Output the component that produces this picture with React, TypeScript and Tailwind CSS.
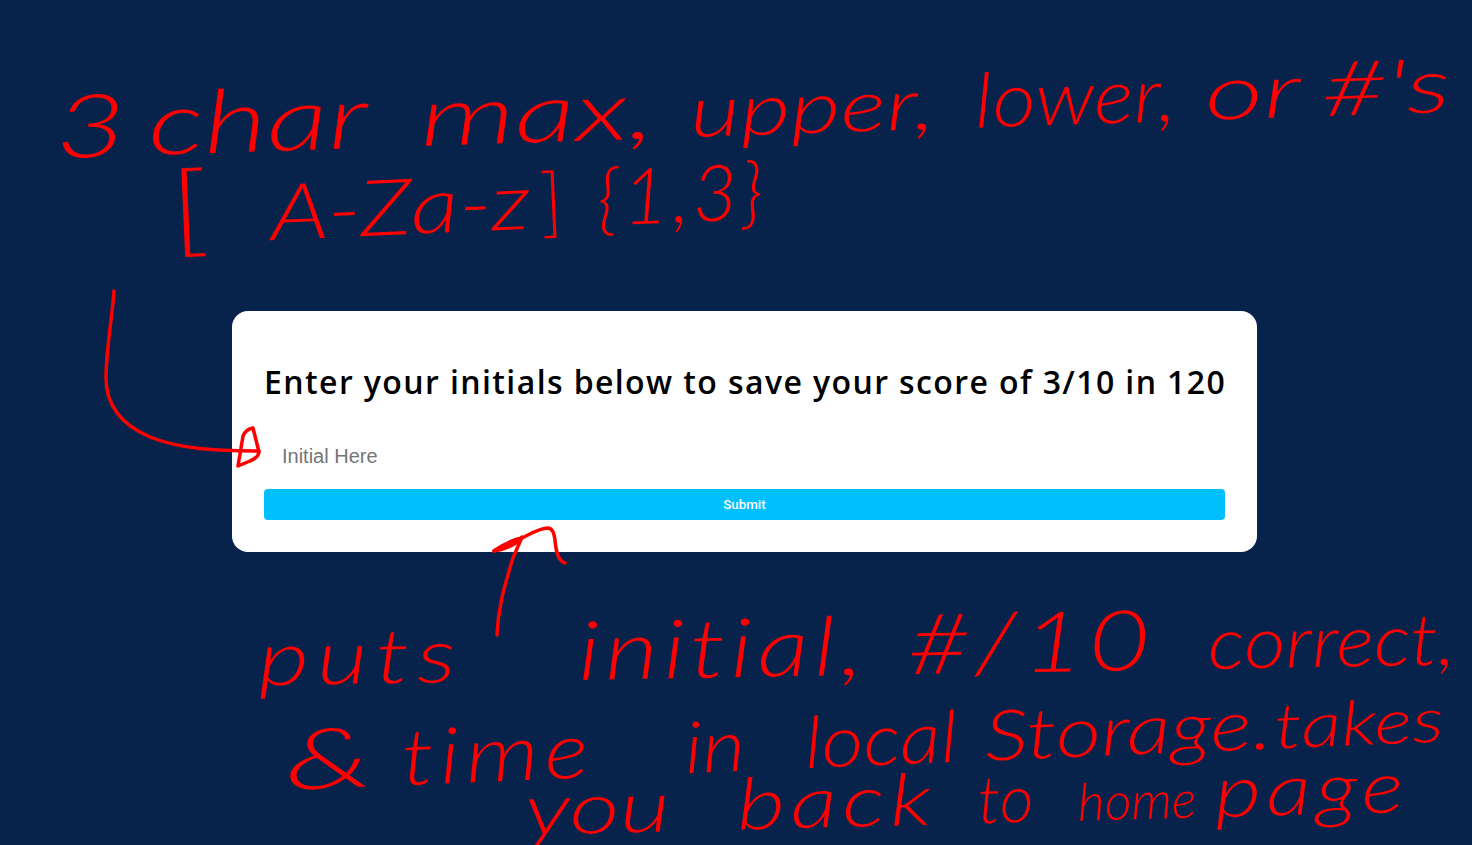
function Word({ className, children }: { className: string; children: React.ReactNode }) {
  return <span className={`block shrink-0 origin-left ${className}`}>{children}</span>;
}

const noteRow =
  "flex shrink-0 items-baseline origin-left whitespace-nowrap font-['Lato',sans-serif] font-light italic leading-none text-[#ff0000]";

export default function App() {
  return (
    <div className="relative flex h-screen flex-col overflow-hidden bg-[#07234b]">
      {/* notes above the card */}
      <div className="flex h-[311px] shrink-0 flex-col pt-[82px]">
        <div className={`${noteRow} rotate-[-1.9deg] pl-[55px] text-[88px]`}>
          <Word className="w-[93px] scale-x-[1.4]">3</Word>
          <Word className="w-[272px] scale-x-[1.39]">char</Word>
          <Word className="w-[270px] scale-x-[1.48] text-[82px]">max,</Word>
          <Word className="w-[285px] scale-x-[1.35] text-[72px]">upper,</Word>
          <Word className="w-[230px] scale-x-[1.11] text-[76px]">lower,</Word>
          <Word className="w-[117px] scale-x-[1.5] text-[76px]">or</Word>
          <Word className="scale-x-[1.47] text-[76px]">#'s</Word>
        </div>
        <div className={`${noteRow} -mt-[7px] rotate-[-2.5deg] pl-[170px] text-[78px]`}>
          <Word className="w-[100px] scale-x-[1.3] text-[100px] not-italic">[</Word>
          <Word className="w-[270px] scale-x-[1.23]">A-Za-z</Word>
          <Word className="w-[57px] text-[76px] not-italic">]</Word>
          <Word className="tracking-[4px]">{"{1,3}"}</Word>
        </div>
      </div>

      <div className="ml-[232px] h-[241px] w-[1025px] shrink-0 rounded-2xl bg-white px-8 pt-[52px]">
        <h1 className="whitespace-nowrap font-['Open_Sans',sans-serif] text-[32px] font-semibold leading-[38px] tracking-[1.4px] text-black">
          Enter your initials below to save your score of 3/10 in 120
        </h1>
        <form className="mt-[37px] flex flex-col">
          <input
            placeholder="Initial Here"
            className="h-[36px] w-full pl-[18px] font-['Liberation_Sans',sans-serif] text-[20px] outline-none placeholder:text-[#757575]"
          />
          <button className="mt-[15px] h-[31px] w-full rounded bg-[#00bfff] font-['Roboto',sans-serif] text-[13.33px] font-medium text-white">
            Submit
          </button>
        </form>
      </div>

      {/* notes below the card */}
      <div className="flex shrink-0 flex-col pt-[64px]">
        <div className={`${noteRow} rotate-[-1deg] pl-[258px] text-[84px]`}>
          <Word className="w-[320px] scale-x-[1.3] text-[76px] tracking-[6px]">puts</Word>
          <Word className="w-[330px] scale-x-[1.26] text-[82px] tracking-[4px]">initial,</Word>
          <Word className="w-[300px] scale-x-[1.26] tracking-[4px]">#/10</Word>
          <Word className="scale-x-[1.12] text-[72px]">correct,</Word>
        </div>
        <div className={`${noteRow} mt-[28px] rotate-[-2.4deg] pl-[285px] text-[84px]`}>
          <Word className="w-[117px] scale-x-[1.6]">&amp;</Word>
          <Word className="w-[283px] scale-x-[1.2] text-[78px] tracking-[5px]">time</Word>
          <Word className="w-[120px] scale-x-[1.15] text-[72px]">in</Word>
          <Word className="w-[180px] scale-x-[1.13] text-[72px]">local</Word>
          <Word className="w-[290px] scale-x-[1.26] text-[70px]">Storage.</Word>
          <Word className="scale-x-[1.3] text-[62px]">takes</Word>
        </div>
        <div className={`${noteRow} -mt-[27px] rotate-[-1.5deg] pl-[525px] text-[72px]`}>
          <Word className="w-[212px] scale-x-[1.36]">you</Word>
          <Word className="w-[241px] scale-x-[1.3] tracking-[4px]">back</Word>
          <Word className="w-[100px] text-[66px]">to</Word>
          <Word className="w-[137px] text-[52px]">home</Word>
          <Word className="scale-x-[1.25] tracking-[4px]">page</Word>
        </div>
      </div>

      {/* arrows */}
      <svg
        className="pointer-events-none absolute inset-0"
        width="1472"
        height="845"
        viewBox="0 0 1472 845"
        fill="none"
        stroke="#ff0000"
        strokeWidth="3.5"
        strokeLinecap="round"
        strokeLinejoin="round"
      >
        <path d="M114 291C112 320 106 350 106 378C106 405 122 425 150 437C180 449 215 451 259 451" />
        <path d="M238 466L243 436Q246 429 253 428L259 452Q258 458 250 461Z" />
        <path d="M497 635C498 610 503 590 513 558L522 537" />
        <path d="M494 551C505 543 513 541 522 538C532 533 540 528 548 528C553 529 554 533 555 540C556 552 558 561 565 563" />
        <path d="M494 551Q508 541 522 538Q512 548 494 551Z" fill="#ff0000" />
      </svg>
    </div>
  );
}
